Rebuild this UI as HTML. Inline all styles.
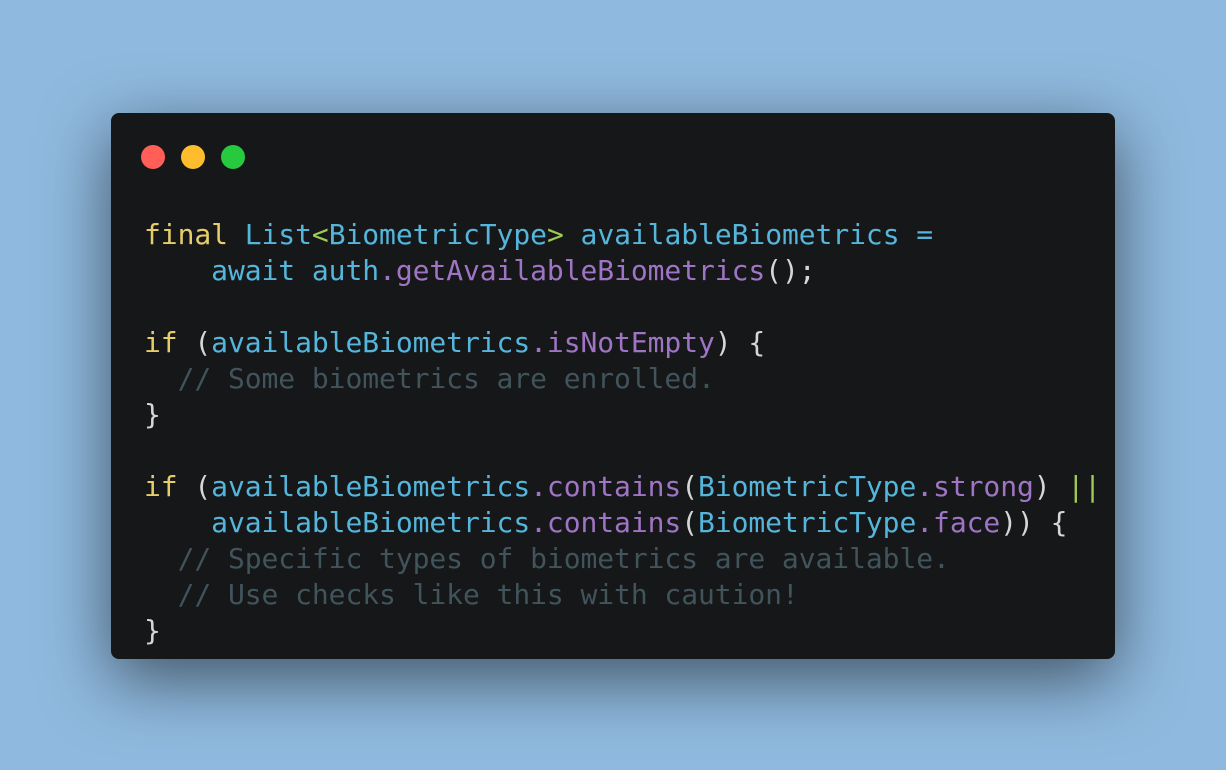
<!DOCTYPE html>
<html><head><style>
html,body{margin:0;padding:0;width:1226px;height:770px;overflow:hidden;background:#8fb9de;}
.win{position:absolute;left:111px;top:113px;width:1004px;height:546px;background:#151718;border-radius:8px;box-shadow:0 20px 68px rgba(0,0,0,0.55);}
.dot{position:absolute;top:32px;width:24px;height:24px;border-radius:50%;}
pre{position:absolute;left:33px;top:104px;margin:0;font-family:"DejaVu Sans Mono","Liberation Mono",monospace;font-size:28px;letter-spacing:-0.07px;line-height:36px;color:#d4d7d6;}
.k{color:#e6cd69}.b{color:#55b5db}.p{color:#a074c4}.g{color:#9fca56}.c{color:#41535b}
</style></head><body>
<div class="win">
<div class="dot" style="left:30px;background:#ff5f56"></div>
<div class="dot" style="left:70px;background:#ffbd2e"></div>
<div class="dot" style="left:110px;background:#27c93f"></div>
<pre><span class="k">final</span> <span class="b">List</span><span class="g">&lt;</span><span class="b">BiometricType</span><span class="g">&gt;</span> <span class="b">availableBiometrics</span> <span class="b">=</span>
    <span class="b">await</span> <span class="b">auth</span><span class="p">.getAvailableBiometrics</span>();

<span class="k">if</span> (<span class="b">availableBiometrics</span><span class="p">.isNotEmpty</span>) {
  <span class="c">// Some biometrics are enrolled.</span>
}

<span class="k">if</span> (<span class="b">availableBiometrics</span><span class="p">.contains</span>(<span class="b">BiometricType</span><span class="p">.strong</span>) <span class="g">||</span>
    <span class="b">availableBiometrics</span><span class="p">.contains</span>(<span class="b">BiometricType</span><span class="p">.face</span>)) {
  <span class="c">// Specific types of biometrics are available.</span>
  <span class="c">// Use checks like this with caution!</span>
}</pre>
</div>
</body></html>
